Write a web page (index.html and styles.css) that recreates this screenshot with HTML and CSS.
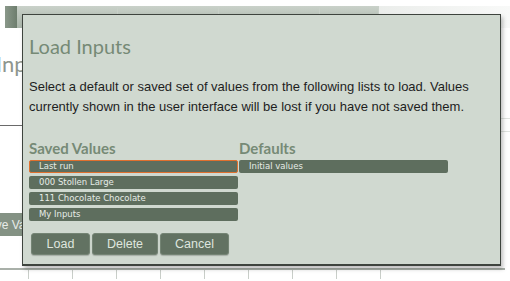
FILE: index.html
```html
<!DOCTYPE html>
<html lang="en">
<head>
    <meta charset="UTF-8">
    <meta name="viewport" content="width=device-width, initial-scale=1.0">
    <title>Load Inputs</title>
    <link rel="stylesheet" href="styles.css">
</head>
<body>
    <!-- pagina de fondo, tapada casi entera por el dialogo -->
    <div class="page">
        <div class="tabbar">
            <span class="tab-edge"></span>
            <span class="tab">Stollen</span>
            <span class="tab">Inputs</span>
            <span class="tab">Results</span>
            <span class="tab tab-last">Notes</span>
        </div>
        <h2 class="page-title">Inputs</h2>
        <div class="page-rule"></div>
        <div class="field-box"></div>
        <button class="page-btn">Save Values</button>
        <div class="ruler">
            <span></span><span></span><span></span><span></span><span></span><span></span><span></span><span></span><span></span>
        </div>
    </div>

    <div class="dialog">
        <h1 class="dialog-title">Load Inputs</h1>
        <p class="dialog-text">Select a default or saved set of values from the following lists to load. Values currently shown in the user interface will be lost if you have not saved them.</p>

        <div class="lists">
            <div class="list">
                <h3>Saved Values</h3>
                <div class="item selected">Last run</div>
                <div class="item">000 Stollen Large</div>
                <div class="item">111 Chocolate Chocolate</div>
                <div class="item">My Inputs</div>
            </div>
            <div class="list">
                <h3>Defaults</h3>
                <div class="item">Initial values</div>
            </div>
        </div>

        <div class="actions">
            <button class="btn btn-load">Load</button>
            <button class="btn btn-delete">Delete</button>
            <button class="btn btn-cancel">Cancel</button>
        </div>
    </div>
</body>
</html>
```

FILE: styles.css
```css
body {
    margin: 0;
    width: 510px;
    height: 281px;
    overflow: hidden;
    background-color: #ffffff;
    font-family: "Liberation Sans", Arial, sans-serif;
    position: relative;
}

.page {
    padding-top: 6px;
}

.tabbar {
    display: flex;
    height: 22px;
    margin-left: 5px;
    width: 505px;
    background: linear-gradient(to right, #e3e7e3 60%, #eef0ee 80%, #f8f9f8);
}

.tab-edge {
    width: 12px;
    background: linear-gradient(to right, #8a988a, #6d7d6d);
}

.tab {
    width: 100px;
    border-right: 1px solid #c8d0c8;
    background: linear-gradient(to bottom, #c9d1c9, #a9b5a9);
    color: transparent;
    font-size: 11px;
}

.tab-last {
    width: 58px;
}

.page-title {
    margin: 22px 0 0 -4px;
    font-family: "Lato", sans-serif;
    font-weight: 400;
    font-size: 22px;
    color: #8e968e;
}

.page-rule {
    margin-top: 48px;
    height: 1px;
    background: #6a6a6a;
    width: 40px;
}

.field-box {
    position: absolute;
    left: 470px;
    top: 118px;
    width: 60px;
    height: 12px;
    border: 1px solid #dfe3df;
    background: #fff;
}

.page-btn {
    margin: 87px 0 0 -27px;
    height: 23px;
    padding: 0 8px;
    border: none;
    border-radius: 3px;
    background: #849284;
    color: #e8ece8;
    font-family: "Liberation Sans", Arial, sans-serif;
    font-size: 12px;
}

.ruler {
    position: absolute;
    left: 0;
    top: 268px;
    width: 505px;
    height: 13px;
    border-top: 2px solid #a9b0a9;
    display: flex;
    gap: 43px;
    padding-left: 28px;
    box-sizing: border-box;
}

.ruler span {
    width: 1px;
    height: 9px;
    background: #c9cec9;
}

/* el dialogo va encima de la pagina */
.dialog {
    position: absolute;
    left: 22px;
    top: 14px;
    width: 465px;
    height: 249px;
    border: 1px solid #3e443e;
    border-bottom-width: 2px;
    background-color: #d0d9d0;
    box-shadow: 2px 3px 4px rgba(0, 0, 0, 0.25);
    padding: 0 6px;
    box-sizing: content-box;
}

.dialog-title {
    margin: 19px 0 0 0;
    font-family: "Lato", sans-serif;
    font-weight: 400;
    font-size: 20px;
    line-height: 24px;
    color: #768a76;
}

.dialog-text {
    margin: 19px 0 0 0;
    font-size: 13px;
    line-height: 20px;
    color: #1e1e1e;
}

.lists {
    display: grid;
    grid-template-columns: 210px 210px;
    margin-top: 22px;
}

.list h3 {
    margin: 0 0 3px 0;
    font-family: "Lato", sans-serif;
    font-weight: 700;
    font-size: 15px;
    line-height: 18px;
    color: #768a76;
}

.item {
    width: 209px;
    height: 13px;
    box-sizing: border-box;
    margin-bottom: 3px;
    padding-left: 10px;
    border-radius: 2px;
    background: #5e6e5e;
    color: #e6ece6;
    font-family: "DejaVu Sans", Verdana, sans-serif;
    font-size: 8.5px;
    line-height: 13px;
}

.item.selected {
    border: 1px solid #e0702e;
    padding-left: 9px;
    line-height: 11px;
}

.actions {
    display: flex;
    gap: 2px;
    margin: 9px 0 0 2px;
}

.btn {
    height: 22px;
    padding: 0;
    border: 1px solid #748474;
    border-radius: 3px;
    background: #627262;
    color: #dfe6df;
    font-family: "Liberation Sans", Arial, sans-serif;
    font-size: 12.5px;
    box-shadow: 0 1px 1px rgba(0, 0, 0, 0.2);
}

.btn-load {
    width: 59px;
}

.btn-delete {
    width: 66px;
}

.btn-cancel {
    width: 69px;
}
```
